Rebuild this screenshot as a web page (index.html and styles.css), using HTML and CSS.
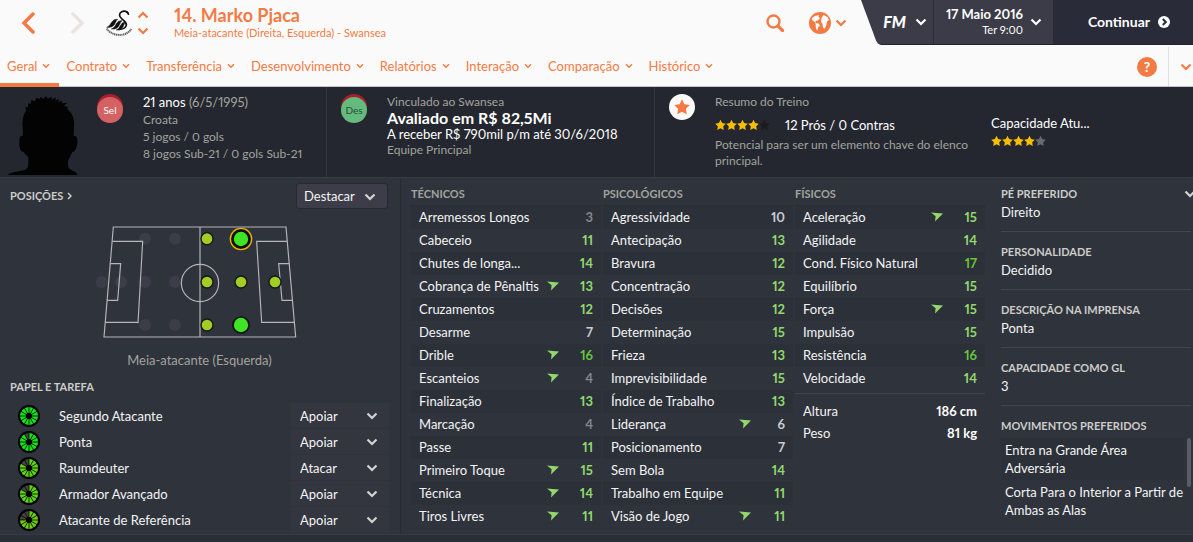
FILE: index.html
```html
<!DOCTYPE html>
<html lang="pt-BR">
<head>
  <meta charset="UTF-8">
  <meta name="viewport" content="width=device-width, initial-scale=1.0">
  <title>Marko Pjaca</title>
  <link rel="stylesheet" href="styles.css">
</head>
<body>
  <!-- Símbolos reutilizados -->
  <svg class="symbols" aria-hidden="true">
    <symbol id="chevron" viewBox="0 0 12 8"><path d="M1.5 1.5 6 6l4.500-4.500" fill="none" stroke="currentColor" stroke-width="2.200"/></symbol>
    <symbol id="star" viewBox="0 0 24 24"><path d="M12 .5 15.600 7.700 23.600 9 17.900 14.800 19.100 23 12 19.200 4.900 23 6.100 14.800.4 9 8.400 7.700z" fill="currentColor"/></symbol>
    <symbol id="rise" viewBox="0 0 12 10"><path d="M0 .5 12 1.500 4 9.500 4.600 4.200z" fill="currentColor"/></symbol>
    <symbol id="spokes" viewBox="0 0 22 22">
      <path d="M11 1v20M1 11h20M6 2.300l10 17.400M16 2.300 6 19.700M2.300 6l17.400 10M2.300 16 19.700 6" stroke="#000" stroke-width=".8"/>
      <circle cx="11" cy="11" r="3" fill="#000"/>
    </symbol>
  </svg>

  <header class="topbar">
    <button class="arrow" aria-label="Voltar"><svg width="14" height="22" viewBox="0 0 14 22"><path d="M12 2 3 11l9 9" fill="none" stroke="currentColor" stroke-width="3.500" stroke-linecap="round"/></svg></button>
    <button class="arrow arrow-off" aria-label="Avançar" disabled><svg width="14" height="22" viewBox="0 0 14 22"><path d="m2 2 9 9-9 9" fill="none" stroke="currentColor" stroke-width="3.500" stroke-linecap="round"/></svg></button>
    <svg class="crest" viewBox="0 0 78 78">
      <path d="M68 14C66 4 55 1 47 5c-9 5-8 15 0 21 9 7 17 13 13 22-3 7-11 10-20 10" fill="none" stroke="#111" stroke-width="5"/>
      <path d="M56 3c8-2 14 4 13 13l-5-5z" fill="#111"/>
      <path d="M2 52c10-3 12-14 19-20 5-4 10-4 14-4-7 5-6 15-14 20-6 4-12 5-19 4zM16 57c11-3 12-14 19-21 4-4 9-4 13-4-7 5-7 16-14 21-6 4-11 5-18 4zM31 60c9-3 11-13 17-20 3-3 7-4 10-3-5 6-5 14-11 19-5 4-10 5-16 4z" fill="#111" stroke="#111" stroke-width="1.500"/>
      <path d="M2 56c16 23 56 27 74 1" fill="none" stroke="#666" stroke-width="6" stroke-dasharray="4 1.500"/>
    </svg>
    <div class="stepper">
      <button aria-label="Jogador anterior"><svg class="flip" width="12" height="8"><use href="#chevron"/></svg></button>
      <button aria-label="Próximo jogador"><svg width="12" height="8"><use href="#chevron"/></svg></button>
    </div>
    <div class="player">
      <h1>14. Marko Pjaca</h1>
      <p>Meia-atacante (Direita, Esquerda) - Swansea</p>
    </div>
    <button class="search" aria-label="Buscar"><svg width="18" height="18" viewBox="0 0 18 18"><circle cx="7.500" cy="7.500" r="6" fill="none" stroke="currentColor" stroke-width="2.400"/><path d="m12 12 4.500 4.500" stroke="currentColor" stroke-width="3.200" stroke-linecap="round"/></svg></button>
    <button class="world" aria-label="Mundo">
      <svg width="22" height="22" viewBox="0 0 22 22"><circle cx="11" cy="11" r="11" fill="currentColor"/><path d="M3 6l3-2 4-1-.5 2L11 6 9 8.500 6.500 9 7 11 5 9.500 3 8zM6.500 11l3 .5 1.500 2-2 2-.5 3-1.500-1.500zM12.500 6l2-3 4 2 1.500 3-2 1.500-.5 3-1.500 4-2-.5-.5-4-1.500-2z" fill="#fafafa"/></svg>
      <svg width="12" height="8"><use href="#chevron"/></svg>
    </button>
    <div class="game-menu">
      <button class="fm"><b>FM</b><svg width="12" height="8"><use href="#chevron"/></svg></button>
      <button class="date"><span><b>17 Maio 2016</b><small>Ter 9:00</small></span><svg width="12" height="8"><use href="#chevron"/></svg></button>
      <button class="continue">Continuar
        <svg width="12" height="12" viewBox="0 0 12 12"><circle cx="6" cy="6" r="6" fill="currentColor"/><path d="m4.800 3 3 3-3 3" fill="none" stroke="#2a2b38" stroke-width="2"/></svg>
      </button>
    </div>
  </header>

  <nav class="tabs">
    <a class="active" href="#">Geral<svg><use href="#chevron"/></svg></a>
    <a href="#">Contrato<svg><use href="#chevron"/></svg></a>
    <a href="#">Transferência<svg><use href="#chevron"/></svg></a>
    <a href="#">Desenvolvimento<svg><use href="#chevron"/></svg></a>
    <a href="#">Relatórios<svg><use href="#chevron"/></svg></a>
    <a href="#">Interação<svg><use href="#chevron"/></svg></a>
    <a href="#">Comparação<svg><use href="#chevron"/></svg></a>
    <a href="#">Histórico<svg><use href="#chevron"/></svg></a>
    <button class="help" aria-label="Ajuda">?</button>
    <button class="more" aria-label="Mais"><svg width="12" height="8"><use href="#chevron"/></svg></button>
  </nav>

  <section class="summary">
    <div class="info bio">
      <svg class="photo" viewBox="0 0 240 240"><path d="M22 237C34 228 58 226 72 223C82 220 85 212 85 200V184C78 178 73 170 70 168C60 167 57 150 58 136C58 124 61 118 69 120L68 92C66 70 70 56 78 44L76 32L84 34L84 22L92 24L94 12L104 16L110 5L118 9L122 2L130 8L138 1L144 8L154 2L156 11L168 4L166 14L178 8L174 18L188 14L184 22L202 20L192 29L206 34L200 38C218 50 224 70 222 92L221 120C230 118 233 126 232 138C231 154 226 168 216 169C212 180 208 188 204 194V206C205 218 212 221 220 225C228 228 231 232 232 237Z"/></svg>
      <div class="badge red">Sel</div>
      <div class="lines">
        <p class="age"><span class="white">21 anos</span> (6/5/1995)</p>
        <p>Croata</p>
        <p>5 jogos / 0 gols</p>
        <p>8 jogos Sub-21 / 0 gols Sub-21</p>
      </div>
    </div>
    <div class="info">
      <div class="badge green">Des</div>
      <div class="lines tight">
        <p>Vinculado ao Swansea</p>
        <p class="value">Avaliado em R$ 82,5Mi</p>
        <p class="white">A receber R$ 790mil p/m até 30/6/2018</p>
        <p>Equipe Principal</p>
      </div>
    </div>
    <div class="info">
      <div class="badge round"><svg width="16" height="16"><use href="#star"/></svg></div>
      <div class="lines tight training">
        <p>Resumo do Treino</p>
        <p class="white rating"><span class="stars"><svg><use href="#star"/></svg><svg><use href="#star"/></svg><svg><use href="#star"/></svg><svg><use href="#star"/></svg><svg class="dark"><use href="#star"/></svg></span>12 Prós / 0 Contras</p>
        <p>Potencial para ser um elemento chave do elenco principal.</p>
      </div>
    </div>
    <div class="ability">
      <p>Capacidade Atu...</p>
      <span class="stars"><svg><use href="#star"/></svg><svg><use href="#star"/></svg><svg><use href="#star"/></svg><svg><use href="#star"/></svg><svg class="grey"><use href="#star"/></svg></span>
    </div>
  </section>

  <main class="panels">
    <section class="positions">
      <div class="panel-head">
        <h2><a href="#">Posições <svg width="5" height="8" viewBox="0 0 5 8"><path d="m1 1 3 3-3 3" fill="none" stroke="currentColor" stroke-width="1.500"/></svg></a></h2>
        <label class="select highlight"><select aria-label="Destacar"><option>Destacar</option></select><svg width="12" height="8"><use href="#chevron"/></svg></label>
      </div>
      <svg class="pitch" viewBox="285 135 630 360">
        <g fill="#3b3e48">
          <circle cx="435" cy="182" r="18"/><circle cx="525" cy="182" r="18"/>
          <circle cx="305" cy="312" r="18"/><circle cx="363" cy="312" r="18"/><circle cx="435" cy="312" r="18"/><circle cx="525" cy="312" r="18"/>
          <circle cx="435" cy="441" r="18"/><circle cx="525" cy="441" r="18"/>
        </g>
        <g fill="none" stroke="#b4b6bb" stroke-width="3.500">
          <path d="M340 147h518l29 330H312zM600 147v330"/>
          <path d="M337 190h91l-14 246M316 433h99M331 257h31l-9 110h-32"/>
          <path d="M861 190h-91l15 243h98M867 257h-31l10 110h31"/>
          <circle cx="600" cy="315" r="56"/>
        </g>
        <g fill="#a2cd24" stroke="#15170f" stroke-width="4">
          <circle cx="621" cy="182" r="18"/><circle cx="621" cy="312" r="18"/><circle cx="621" cy="441" r="18"/>
          <circle cx="723" cy="312" r="18"/><circle cx="825" cy="312" r="18"/>
        </g>
        <circle cx="723" cy="183" r="32" fill="#15170f" stroke="#efb20a" stroke-width="4"/>
        <g fill="#40e427" stroke="#0a120a" stroke-width="5">
          <circle cx="723" cy="183" r="24"/><circle cx="723" cy="441" r="24"/>
        </g>
      </svg>
      <p class="caption">Meia-atacante (Esquerda)</p>

      <h2>Papel e tarefa</h2>
      <ul class="roles">
        <li>
          <svg class="wheel" viewBox="0 0 22 22"><circle cx="11" cy="11" r="11"/><circle class="lit" cx="11" cy="11" r="6" stroke="#12e619"/><use href="#spokes"/></svg>
          <span>Segundo Atacante</span>
          <label class="select"><select aria-label="Segundo Atacante"><option>Apoiar</option></select><svg width="12" height="8"><use href="#chevron"/></svg></label>
        </li>
        <li>
          <svg class="wheel" viewBox="0 0 22 22"><circle cx="11" cy="11" r="11"/><circle class="lit" cx="11" cy="11" r="6" stroke="#444"/><circle class="lit" cx="11" cy="11" r="6" pathLength="12" stroke="#12e619" stroke-dasharray="11 12"/><use href="#spokes"/></svg>
          <span>Ponta</span>
          <label class="select"><select aria-label="Ponta"><option>Apoiar</option></select><svg width="12" height="8"><use href="#chevron"/></svg></label>
        </li>
        <li>
          <svg class="wheel" viewBox="0 0 22 22"><circle cx="11" cy="11" r="11"/><circle class="lit" cx="11" cy="11" r="6" stroke="#444"/><circle class="lit" cx="11" cy="11" r="6" pathLength="12" stroke="#5bd90f" stroke-dasharray="10 12"/><use href="#spokes"/></svg>
          <span>Raumdeuter</span>
          <label class="select"><select aria-label="Raumdeuter"><option>Atacar</option></select><svg width="12" height="8"><use href="#chevron"/></svg></label>
        </li>
        <li>
          <svg class="wheel" viewBox="0 0 22 22"><circle cx="11" cy="11" r="11"/><circle class="lit" cx="11" cy="11" r="6" stroke="#444"/><circle class="lit" cx="11" cy="11" r="6" pathLength="12" stroke="#5bd90f" stroke-dasharray="10 12"/><use href="#spokes"/></svg>
          <span>Armador Avançado</span>
          <label class="select"><select aria-label="Armador Avançado"><option>Apoiar</option></select><svg width="12" height="8"><use href="#chevron"/></svg></label>
        </li>
        <li>
          <svg class="wheel" viewBox="0 0 22 22"><circle cx="11" cy="11" r="11"/><circle class="lit" cx="11" cy="11" r="6" stroke="#444"/><circle class="lit" cx="11" cy="11" r="6" pathLength="12" stroke="#6cd00c" stroke-dasharray="9 12"/><use href="#spokes"/></svg>
          <span>Atacante de Referência</span>
          <label class="select"><select aria-label="Atacante de Referência"><option>Apoiar</option></select><svg width="12" height="8"><use href="#chevron"/></svg></label>
        </li>
      </ul>
    </section>

    <section class="attributes">
      <table>
        <thead><tr><th colspan="3">Técnicos</th></tr></thead>
        <tbody>
          <tr><td>Arremessos Longos</td><td></td><td class="low">3</td></tr>
          <tr><td>Cabeceio</td><td></td><td class="good">11</td></tr>
          <tr><td>Chutes de longa...</td><td></td><td class="good">14</td></tr>
          <tr><td>Cobrança de Pênaltis</td><td><svg><use href="#rise"/></svg></td><td class="good">13</td></tr>
          <tr><td>Cruzamentos</td><td></td><td class="good">12</td></tr>
          <tr><td>Desarme</td><td></td><td>7</td></tr>
          <tr><td>Drible</td><td><svg><use href="#rise"/></svg></td><td class="great">16</td></tr>
          <tr><td>Escanteios</td><td><svg><use href="#rise"/></svg></td><td class="low">4</td></tr>
          <tr><td>Finalização</td><td></td><td class="good">13</td></tr>
          <tr><td>Marcação</td><td></td><td class="low">4</td></tr>
          <tr><td>Passe</td><td></td><td class="good">11</td></tr>
          <tr><td>Primeiro Toque</td><td><svg><use href="#rise"/></svg></td><td class="good">15</td></tr>
          <tr><td>Técnica</td><td><svg><use href="#rise"/></svg></td><td class="good">14</td></tr>
          <tr><td>Tiros Livres</td><td><svg><use href="#rise"/></svg></td><td class="good">11</td></tr>
        </tbody>
      </table>

      <table>
        <thead><tr><th colspan="3">Psicológicos</th></tr></thead>
        <tbody>
          <tr><td>Agressividade</td><td></td><td>10</td></tr>
          <tr><td>Antecipação</td><td></td><td class="good">13</td></tr>
          <tr><td>Bravura</td><td></td><td class="good">12</td></tr>
          <tr><td>Concentração</td><td></td><td class="good">12</td></tr>
          <tr><td>Decisões</td><td></td><td class="good">12</td></tr>
          <tr><td>Determinação</td><td></td><td class="good">15</td></tr>
          <tr><td>Frieza</td><td></td><td class="good">13</td></tr>
          <tr><td>Imprevisibilidade</td><td></td><td class="good">15</td></tr>
          <tr><td>Índice de Trabalho</td><td></td><td class="good">13</td></tr>
          <tr><td>Liderança</td><td><svg><use href="#rise"/></svg></td><td>6</td></tr>
          <tr><td>Posicionamento</td><td></td><td>7</td></tr>
          <tr><td>Sem Bola</td><td></td><td class="good">14</td></tr>
          <tr><td>Trabalho em Equipe</td><td></td><td class="good">11</td></tr>
          <tr><td>Visão de Jogo</td><td><svg><use href="#rise"/></svg></td><td class="good">11</td></tr>
        </tbody>
      </table>

      <div>
        <table>
          <thead><tr><th colspan="3">Físicos</th></tr></thead>
          <tbody>
            <tr><td>Aceleração</td><td><svg><use href="#rise"/></svg></td><td class="good">15</td></tr>
            <tr><td>Agilidade</td><td></td><td class="good">14</td></tr>
            <tr><td>Cond. Físico Natural</td><td></td><td class="great">17</td></tr>
            <tr><td>Equilíbrio</td><td></td><td class="good">15</td></tr>
            <tr><td>Força</td><td><svg><use href="#rise"/></svg></td><td class="good">15</td></tr>
            <tr><td>Impulsão</td><td></td><td class="good">15</td></tr>
            <tr><td>Resistência</td><td></td><td class="great">16</td></tr>
            <tr><td>Velocidade</td><td></td><td class="good">14</td></tr>
          </tbody>
        </table>
        <dl class="body-data">
          <div><dt>Altura</dt><dd>186 cm</dd></div>
          <div><dt>Peso</dt><dd>81 kg</dd></div>
        </dl>
      </div>
    </section>

    <aside class="details">
      <div class="detail">
        <h2>Pé preferido</h2>
        <p>Direito</p>
        <button class="expand" aria-label="Expandir"><svg width="12" height="8"><use href="#chevron"/></svg></button>
      </div>
      <div class="detail"><h2>Personalidade</h2><p>Decidido</p></div>
      <div class="detail"><h2>Descrição na imprensa</h2><p>Ponta</p></div>
      <div class="detail"><h2>Capacidade como GL</h2><p>3</p></div>
      <div class="detail">
        <h2>Movimentos preferidos</h2>
        <div class="moves">
          <ul>
            <li>Entra na Grande Área Adversária</li>
            <li>Corta Para o Interior a Partir de Ambas as Alas</li>
          </ul>
          <div class="scroll-thumb"></div>
        </div>
      </div>
    </aside>
  </main>
</body>
</html>
```
FILE: styles.css
```css
* {
  margin: 0;
  padding: 0;
  box-sizing: border-box;
}

body {
  min-height: 100vh;
  background: #2a2e37;
  color: #f4f4f4;
  font-family: Lato, "Open Sans", sans-serif;
  font-size: 13px;
  font-variant-numeric: proportional-nums;
  line-height: 18px;
  overflow-x: hidden;
}

button, select {
  border: 0;
  background: none;
  color: inherit;
  font: inherit;
  cursor: pointer;
}

svg {
  display: block;
  flex: none;
}

a {
  color: inherit;
  text-decoration: none;
}

ul {
  list-style: none;
}

.symbols {
  position: absolute;
  width: 0;
  height: 0;
}

/* Barra superior */
.topbar {
  display: flex;
  align-items: center;
  height: 45px;
  background: #fafafa;
  color: #f47a44;
}

.arrow {
  width: 14px;
  margin-left: 21px;
}

.arrow-off {
  margin-left: 36px;
  color: #ebe3e2;
}

.crest {
  width: 26px;
  height: 26px;
  margin-left: 21px;
}

.stepper {
  display: grid;
  gap: 8px;
  margin-left: 5px;
}

.flip {
  transform: rotate(180deg);
}

.player {
  margin-left: 25px;
}

.player h1 {
  font-size: 18px;
  line-height: 20px;
}

.player p {
  font-size: 11px;
  line-height: 16px;
}

.search {
  margin-left: auto;
}

.world {
  display: flex;
  align-items: center;
  gap: 4px;
  margin: 0 14px 0 25px;
}

.game-menu {
  display: flex;
  align-self: stretch;
  background: #3b3c47;
  color: #fff;
  clip-path: polygon(0 0, 100% 0, 100% 100%, 21px 100%, 17px 97%, 15px 90%);
}

.game-menu button {
  display: flex;
  align-items: center;
  justify-content: flex-end;
  border-bottom: 1px solid #22232c;
}

.fm {
  width: 72px;
  padding-right: 6px;
  gap: 9px;
}

.fm b {
  font-size: 16px;
  font-weight: 900;
  font-style: italic;
}

.date {
  width: 120px;
  padding-right: 11px;
  gap: 7px;
}

.game-menu .date {
  border-left: 1px solid #2a2b34;
}

.date span {
  text-align: right;
}

.date b {
  display: block;
  line-height: 16px;
}

.date small {
  display: block;
  font-size: 11px;
  line-height: 16px;
}

.continue {
  width: 140px;
  padding-right: 23px;
  gap: 8px;
  background: #2a2b38;
  font-size: 14px;
  font-weight: bold;
}

.game-menu .continue {
  font-size: 14px;
  font-weight: bold;
}

/* Abas */
.tabs {
  display: flex;
  align-items: stretch;
  height: 42px;
  background: #fafafa;
  border-bottom: 1px solid #c4c5c8;
  color: #f47a44;
}

.tabs a {
  display: flex;
  align-items: center;
  gap: 5px;
  margin-bottom: -1px;
  padding: 4px 9px 0 7px;
  border-bottom: 4px solid transparent;
}

.tabs a.active {
  border-color: #f47a44;
}

.tabs a svg {
  width: 8px;
  height: 6px;
}

.help {
  align-self: center;
  width: 20px;
  height: 20px;
  margin: 3px 11px 0 auto;
  border-radius: 50%;
  background: #f47a44;
  color: #fafafa;
  font-size: 14px;
  font-weight: 900;
}

.more {
  width: 25px;
  margin-top: 2px;
  padding-left: 11px;
  border-left: 1px solid #dfdfe1;
}

/* Resumo do jogador */
.summary {
  display: grid;
  grid-template-columns: 326fr 328fr 331fr 208fr;
  min-height: 91px;
  background: #24272f;
  border-bottom: 1px solid #353c46;
  color: #a3a39e;
  font-size: 12px;
}

.info {
  display: flex;
  align-items: flex-start;
  gap: 20px;
  padding: 7px 14px 0;
}

.info + .info {
  border-left: 1px solid #33353a;
}

.bio {
  padding-left: 0;
}

.photo {
  width: 80px;
  height: 80px;
  margin: 2px -3px 0 0;
  fill: #030303;
}

.badge {
  flex: none;
  width: 26px;
  height: 26px;
  margin-top: 3px;
  border-radius: 50%;
  font-size: 10px;
  line-height: 26px;
  text-align: center;
}

.red {
  background: #d56262;
  box-shadow: 0 -3px #a8202e;
  color: #fff;
}

.green {
  background: #65ba7e;
  box-shadow: 0 -3px #a8202e;
  color: #23533a;
}

.round {
  display: grid;
  place-items: center;
  margin-top: 0;
  background: #fafafa;
  color: #f47a44;
}

.lines {
  line-height: 17px;
}

.tight {
  line-height: 16px;
}

.age {
  font-size: 13px;
}

.white {
  color: #fff;
  font-size: 13px;
}

.value {
  color: #fff;
  font-size: 16px;
  font-weight: bold;
}

.rating {
  display: flex;
  align-items: center;
  gap: 15px;
  padding: 7px 0 4px;
}

.training {
  max-width: 256px;
}

.stars {
  display: flex;
  color: #f7bd05;
}

.stars svg {
  width: 11px;
  height: 12px;
}

.stars .dark {
  color: #1b1b1b;
}

.stars .grey {
  color: #69696f;
}

.ability {
  padding: 27px 0 0 6px;
  color: #fff;
  font-size: 13px;
}

.ability .stars {
  margin-top: 3px;
}

/* Painéis */
.panels {
  display: grid;
  grid-template-columns: 400fr 585fr 208fr;
  background: #2f333c;
  border-bottom: 1px solid #353c46;
}

h2, th {
  color: #ccccc8;
  font-size: 11px;
  font-weight: bold;
  line-height: 16px;
  text-transform: uppercase;
}

.positions {
  padding: 5px 11px 0 10px;
}

.panel-head {
  display: flex;
  align-items: center;
  justify-content: space-between;
}

.panel-head a {
  display: flex;
  align-items: center;
  gap: 4px;
}

.select {
  position: relative;
  width: 98px;
  height: 25px;
  background: #33353f;
}

.select select {
  appearance: none;
  width: 100%;
  height: 100%;
  padding-left: 9px;
}

/* a seta fica por cima do select */
.select svg {
  position: absolute;
  top: 9px;
  right: 11px;
  color: #d4d4d4;
  pointer-events: none;
}

.highlight {
  width: 92px;
  height: 26px;
  margin-right: 1px;
  border: 1px solid #272934;
  border-radius: 3px;
  background: #3c3d49;
}

.highlight select {
  padding-left: 7px;
}

.pitch {
  width: 210px;
  height: 120px;
  margin: 14px auto 8px;
}

.caption {
  margin-bottom: 10px;
  color: #a3a39e;
  text-align: center;
}

.roles {
  display: grid;
  gap: 1px;
  margin-top: 8px;
}

.roles li {
  display: flex;
  align-items: center;
  gap: 19px;
  padding-left: 8px;
}

.roles .select {
  margin-left: auto;
}

.wheel {
  width: 22px;
  height: 22px;
}

.lit {
  fill: none;
  stroke-width: 6;
  transform: rotate(-90deg);
  transform-origin: center;
}

.attributes {
  display: grid;
  grid-template-columns: repeat(3, 1fr);
  align-items: start;
  gap: 2px;
  padding: 8px 0 6px 10px;
  border-left: 1px solid #272b33;
}

table {
  width: 100%;
  border-collapse: collapse;
}

th {
  padding-bottom: 3px;
  border-bottom: 1px solid #2a2d36;
  color: #a3a39e;
  text-align: left;
}

td {
  height: 23px;
}

td:first-child {
  width: 100%;
  padding-left: 8px;
  white-space: nowrap;
}

td:last-child {
  min-width: 35px;
  padding-right: 8px;
  color: #c9ccd2;
  font-weight: bold;
  text-align: right;
}

td svg {
  width: 12px;
  height: 10px;
  margin: 0 7px 0 5px;
  color: #92d86d;
}

tbody tr:nth-child(odd) {
  background: #2c3038;
}

td.low {
  color: #84878f;
}

td.good {
  color: #92d86d;
}

td.great {
  color: #67c43c;
}

.body-data {
  margin-top: 3px;
  padding: 6px 8px 0;
  border-top: 1px solid #42454c;
}

.body-data div {
  display: flex;
  justify-content: space-between;
  line-height: 22px;
}

.body-data dd {
  color: #fff;
  font-weight: bold;
}

.details {
  padding: 0 2px 0 16px;
}

.detail {
  position: relative;
  padding: 12px 0 10px;
  border-bottom: 1px solid #42454c;
}

.detail p {
  margin-top: 1px;
}

.detail:first-child {
  padding-top: 8px;
}

.detail:last-child {
  border-bottom: 0;
}

.expand {
  position: absolute;
  top: 12px;
  right: -5px;
  color: #d4d4d4;
}

.moves {
  display: flex;
  gap: 3px;
  margin-top: 4px;
}

.moves ul {
  flex: 1;
}

.moves li {
  padding: 3px 0 3px 4px;
}

.moves li:first-child {
  background: #2c3038;
}

.scroll-thumb {
  width: 4px;
  height: 49px;
  border-radius: 2px;
  background: #5b5d66;
}
```
